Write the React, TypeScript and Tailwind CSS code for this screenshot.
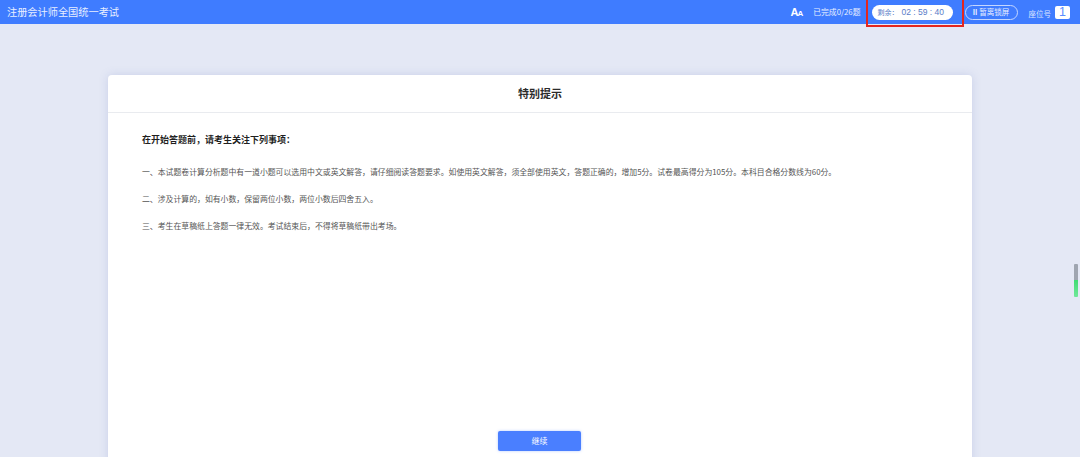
export default function App() {
  return (
    <div className="relative h-[457px] w-[1080px] overflow-hidden bg-[#e4e8f5] [font-family:'Noto_Sans_CJK_SC','Liberation_Sans',sans-serif]">
      <header className="flex h-6 items-center bg-[#3f7cff] pl-[7px] text-white">
        <span className="text-[10.2px] leading-none text-[#e8efff]">注册会计师全国统一考试</span>
        <div className="ml-auto flex items-center">
          <span className="flex items-baseline font-bold leading-none text-white [font-family:'Liberation_Sans',sans-serif]">
            <span className="text-[11px]">A</span>
            <span className="-ml-px text-[8px]">A</span>
          </span>
          <span className="ml-[10px] text-[7.8px] leading-none text-[#e8efff]">已完成0/26题</span>
          <div className="ml-[11px] flex h-[15px] w-[81px] items-center rounded-full bg-white pl-[6px] text-[#5a7cc8]">
            <span className="text-[7px] leading-none">剩余：</span>
            <span className="ml-[3px] text-[8.5px] leading-none [font-family:'Liberation_Sans',sans-serif]">02 : 59 : 40</span>
          </div>
          <div className="ml-[12px] flex h-[15px] w-[53px] items-center justify-center rounded-full border border-[#c4d6ff] text-[7.5px] leading-none text-[#e8efff]">
            <span className="mr-[2px] text-[7px] font-bold">II</span>暂离锁屏
          </div>
          <span className="ml-[11px] mt-[3px] text-[7.5px] leading-none text-[#dce6ff]">座位号</span>
          <div className="ml-[4px] mr-[10px] flex h-[13px] w-[15px] items-center justify-center rounded-[2px] bg-white text-[12.5px] leading-none text-[#5a8cff] [font-family:'Liberation_Sans',sans-serif]">1</div>
        </div>
      </header>

      <main className="flex justify-center pt-[51px]">
        <section className="flex h-[400px] w-[864px] flex-col rounded-t-[4px] bg-white shadow-[0_0_8px_rgba(120,135,200,0.25)]">
          <div className="flex h-[38px] shrink-0 items-center justify-center border-b border-[#e9ebef]">
            <h1 className="text-[11px] font-bold leading-none text-[#2b2b2b]">特别提示</h1>
          </div>
          <div className="flex flex-1 flex-col px-[34px] pt-[21px]">
            <h2 className="text-[9px] font-bold leading-[12px] text-[#1f1f1f]">在开始答题前，请考生关注下列事项：</h2>
            <div className="mt-[21px] flex flex-col gap-[17px] text-[7.87px] leading-[10px] text-[#555]">
              <p>一、本试题卷计算分析题中有一道小题可以选用中文或英文解答，请仔细阅读答题要求。如使用英文解答，须全部使用英文，答题正确的，增加5分。试卷最高得分为105分。本科目合格分数线为60分。</p>
              <p>二、涉及计算的，如有小数，保留两位小数，两位小数后四舍五入。</p>
              <p>三、考生在草稿纸上答题一律无效。考试结束后，不得将草稿纸带出考场。</p>
            </div>
            <div className="mt-auto flex justify-center pb-[24px] pr-px">
              <button className="h-5 w-[83px] rounded-[2px] bg-[#4a7fff] text-[8px] leading-none text-white shadow-[0_0_3px_rgba(74,127,255,0.4)]">继续</button>
            </div>
          </div>
        </section>
      </main>

      <div className="absolute left-[866px] top-0 h-[27px] w-[98px] border-2 border-t-0 border-[#e3261f]" />
      <div className="absolute left-[1074px] top-[264px] flex h-[33px] w-1 flex-col overflow-hidden rounded-[1px]">
        <div className="h-4 bg-[#9fa5b0]" />
        <div className="flex-1 bg-gradient-to-b from-[#3fdc73] to-[#6fe89a]" />
      </div>
    </div>
  );
}
